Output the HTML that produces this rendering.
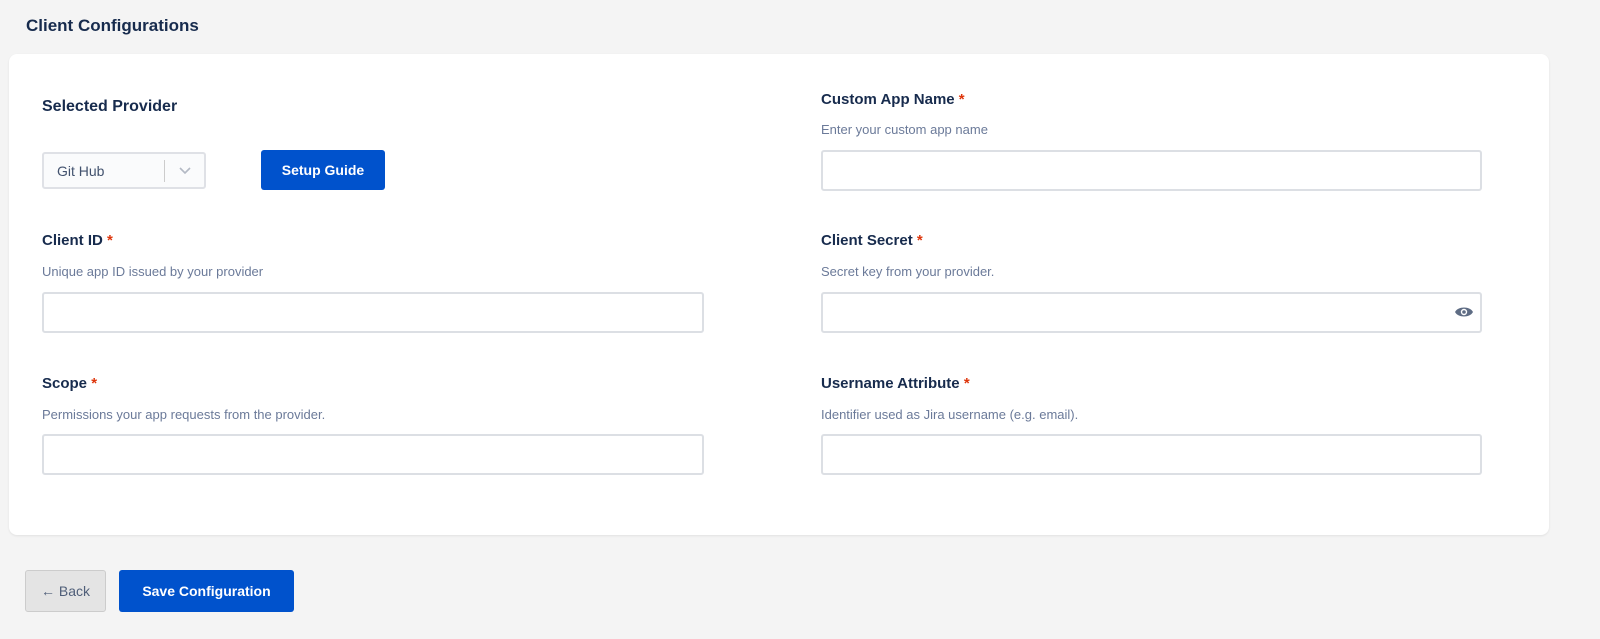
<!DOCTYPE html>
<html><head><style>
*{box-sizing:border-box;margin:0;padding:0}
body{width:1600px;height:639px;background:#f4f4f4;font-family:"Liberation Sans",sans-serif;position:relative;overflow:hidden;color:#172b4d}
.a{position:absolute}
.card{left:9px;top:54px;width:1540px;height:481px;background:#fff;border-radius:8px;box-shadow:0 1px 2px rgba(0,0,0,.08)}
.lbl{font-size:15px;font-weight:bold;color:#172b4d}
.lbl span{color:#de350b}
.desc{font-size:13px;color:#6b7a99}
.inp{height:41px;border:2px solid #dcdfe4;border-radius:3px;background:#fff}
.btn{background:#0052cc;color:#fff;font-weight:bold;font-size:14px;border-radius:3px;display:flex;align-items:center;justify-content:center}
</style></head><body>
<div class="a" style="left:26px;top:16px;font-size:17px;font-weight:bold;color:#172b4d">Client Configurations</div>
<div class="a card"></div>
<div class="a lbl" style="left:42px;top:98px;font-size:16px">Selected Provider</div>
<div class="a" style="left:42px;top:152px;width:164px;height:37px;border:2px solid #dfe1e6;border-radius:3px;background:#fafbfc;font-size:14px;color:#42526e;padding:9px 0 0 13px">Git Hub
<div class="a" style="left:120px;top:6px;width:1px;height:22px;background:#ccc"></div>
<svg class="a" style="left:134px;top:12px" width="14" height="10" viewBox="0 0 14 10"><path d="M2 2l5 5 5-5" fill="none" stroke="#b3b9c4" stroke-width="1.6"/></svg></div>
<div class="a btn" style="left:261px;top:150px;width:124px;height:40px">Setup Guide</div>
<div class="a lbl" style="left:821px;top:91px">Custom App Name <span>*</span></div>
<div class="a desc" style="left:821px;top:122px">Enter your custom app name</div>
<div class="a inp" style="left:821px;top:150px;width:661px"></div>
<div class="a lbl" style="left:42px;top:232px">Client ID <span>*</span></div>
<div class="a desc" style="left:42px;top:264px">Unique app ID issued by your provider</div>
<div class="a inp" style="left:42px;top:292px;width:662px"></div>
<div class="a lbl" style="left:821px;top:232px">Client Secret <span>*</span></div>
<div class="a desc" style="left:821px;top:264px">Secret key from your provider.</div>
<div class="a inp" style="left:821px;top:292px;width:661px"></div>
<svg class="a" style="left:1454px;top:305px" width="20" height="14" viewBox="0 0 20 14"><path d="M1 7C4 1 16 1 19 7C16 13 4 13 1 7Z" fill="#5e6c84"/><circle cx="10" cy="7" r="3.2" fill="#fff"/><circle cx="10" cy="7" r="1.8" fill="#5e6c84"/></svg>
<div class="a lbl" style="left:42px;top:375px">Scope <span>*</span></div>
<div class="a desc" style="left:42px;top:407px">Permissions your app requests from the provider.</div>
<div class="a inp" style="left:42px;top:434px;width:662px"></div>
<div class="a lbl" style="left:821px;top:375px">Username Attribute <span>*</span></div>
<div class="a desc" style="left:821px;top:407px">Identifier used as Jira username (e.g. email).</div>
<div class="a inp" style="left:821px;top:434px;width:661px"></div>
<div class="a" style="left:25px;top:570px;width:81px;height:42px;background:#e4e4e4;border:1px solid #ccc;border-radius:3px;font-size:14px;color:#505f79;display:flex;align-items:center;justify-content:center">← Back</div>
<div class="a btn" style="left:119px;top:570px;width:175px;height:42px">Save Configuration</div>
</body></html>
